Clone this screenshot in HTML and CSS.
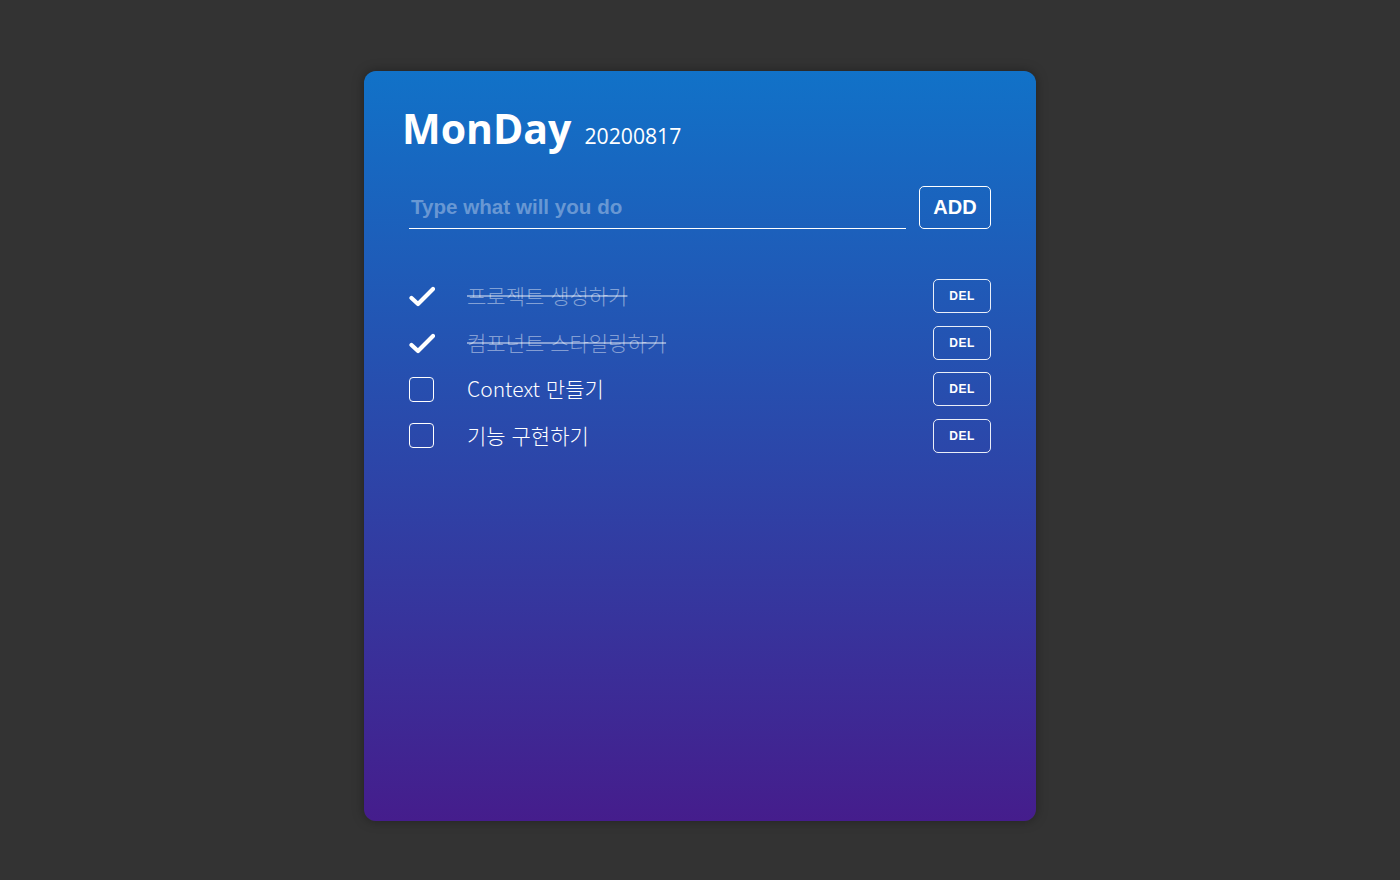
FILE: index.html
```html
<!DOCTYPE html>
<html lang="ko">
<head>
<meta charset="utf-8">
<title>MonDay</title>
<link rel="stylesheet" href="styles.css">
</head>
<body>
<main class="card">
  <header class="head">
    <h1 class="day">MonDay</h1>
    <span class="date">20200817</span>
  </header>
  <form class="form">
    <input class="input" type="text" placeholder="Type what will you do">
    <button class="add" type="button">ADD</button>
  </form>
  <ul class="list">
    <li class="item done">
      <span class="check"><svg viewBox="0 0 26 26" width="26" height="26"><polyline points="2.5,15 9,21 24,6" fill="none" stroke="#fff" stroke-width="4.2" stroke-linecap="round" stroke-linejoin="round"/></svg></span>
      <span class="text">프로젝트 생성하기</span>
      <button class="del" type="button">DEL</button>
    </li>
    <li class="item done">
      <span class="check"><svg viewBox="0 0 26 26" width="26" height="26"><polyline points="2.5,15 9,21 24,6" fill="none" stroke="#fff" stroke-width="4.2" stroke-linecap="round" stroke-linejoin="round"/></svg></span>
      <span class="text">컴포넌트 스타일링하기</span>
      <button class="del" type="button">DEL</button>
    </li>
    <li class="item">
      <span class="check"><span class="box"></span></span>
      <span class="text">Context 만들기</span>
      <button class="del" type="button">DEL</button>
    </li>
    <li class="item">
      <span class="check"><span class="box"></span></span>
      <span class="text">기능 구현하기</span>
      <button class="del" type="button">DEL</button>
    </li>
  </ul>
</main>
</body>
</html>
```

FILE: styles.css
```css
* { box-sizing: border-box; }
html, body { margin: 0; padding: 0; }
body {
  background: #333333;
  width: 1400px;
  height: 880px;
  overflow: hidden;
  font-family: "Open Sans", "Noto Sans CJK KR", sans-serif;
}
.card {
  width: 672px;
  height: 750px;
  margin: 71px auto 0;
  padding: 29px 45px 0;
  border-radius: 12px;
  background: linear-gradient(180deg, #1172c8 0%, #451d8c 100%);
  box-shadow: 0 0 12px rgba(0, 0, 0, 0.35);
  color: #fff;
}
.head {
  display: flex;
  align-items: baseline;
  gap: 13px;
  margin-left: -7px;
}
.day {
  margin: 0;
  font-family: "Open Sans", sans-serif;
  font-weight: 700;
  font-size: 41px;
  line-height: 56px;
}
.date {
  font-family: "Open Sans", sans-serif;
  font-size: 21.2px;
}
.form {
  display: flex;
  align-items: flex-end;
  gap: 13px;
  margin-top: 30px;
}
.input {
  flex: 1;
  height: 43px;
  border: 0;
  border-bottom: 1px solid #fff;
  background: transparent;
  color: #fff;
  font-family: "Liberation Sans", Arial, sans-serif;
  font-weight: 700;
  font-size: 20.6px;
  padding: 0 2px;
  outline: none;
}
.input::placeholder { color: rgba(255, 255, 255, 0.35); }
.add {
  width: 72px;
  height: 43px;
  border: 1px solid #fff;
  border-radius: 5px;
  background: transparent;
  color: #fff;
  font-family: "Liberation Sans", Arial, sans-serif;
  font-weight: 700;
  font-size: 20px;
  padding: 0;
}
.list {
  list-style: none;
  margin: 50px 0 0;
  padding: 0;
  display: flex;
  flex-direction: column;
  gap: 12.67px;
}
.item {
  display: flex;
  align-items: center;
  height: 34px;
}
.check {
  width: 26px;
  height: 26px;
  display: flex;
  align-items: center;
  justify-content: flex-start;
}
.check svg { display: block; }
.box {
  width: 25px;
  height: 25px;
  border: 1px solid #fff;
  border-radius: 4px;
}
.text {
  flex: 1;
  margin-left: 32px;
  margin-top: -2px;
  font-family: "Noto Sans CJK KR", sans-serif;
  font-weight: 300;
  font-size: 21px;
  color: #fff;
}
.done .text {
  color: rgba(255, 255, 255, 0.45);
  text-decoration: line-through;
}
.del {
  width: 58px;
  height: 34px;
  border: 1px solid rgba(255, 255, 255, 0.9);
  border-radius: 5px;
  background: transparent;
  color: #fff;
  font-family: "Liberation Sans", Arial, sans-serif;
  font-weight: 700;
  font-size: 12px;
  letter-spacing: 0.5px;
  padding: 0;
}
```
